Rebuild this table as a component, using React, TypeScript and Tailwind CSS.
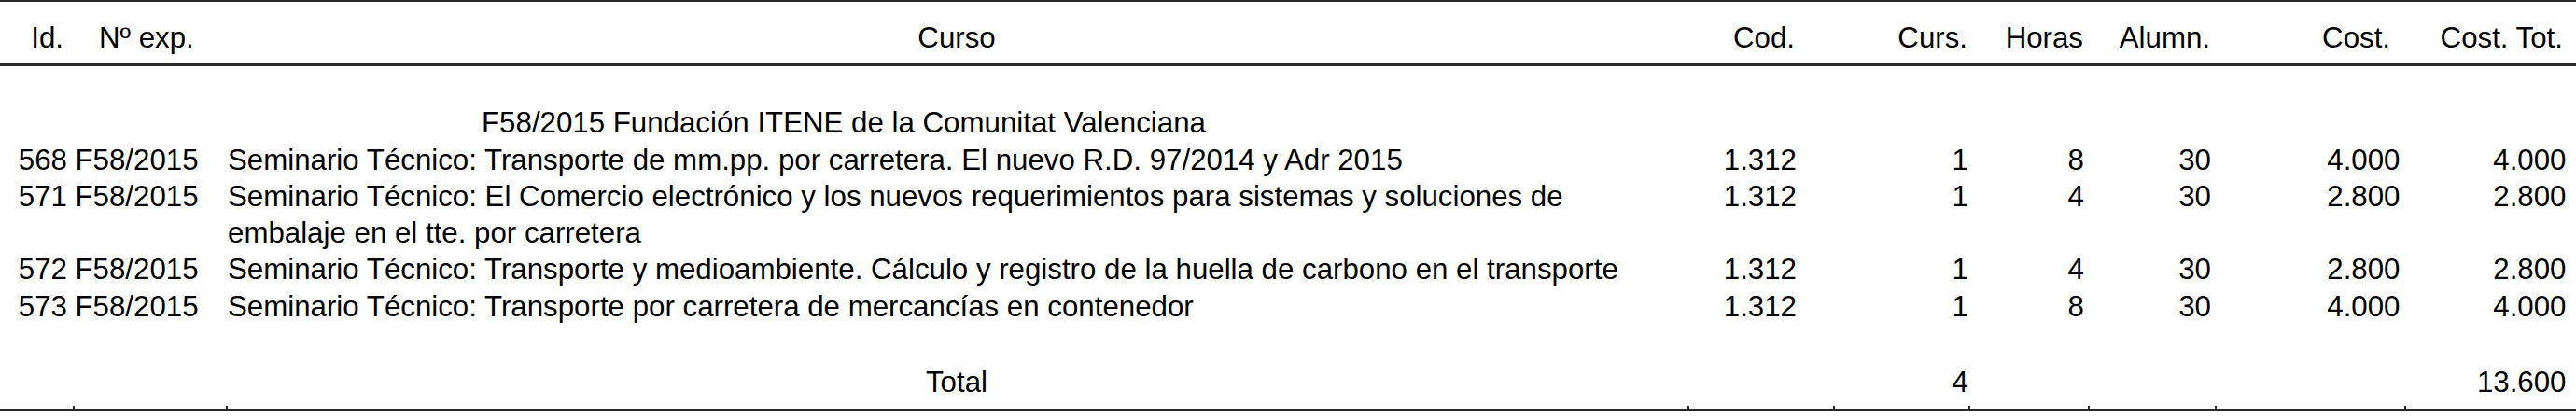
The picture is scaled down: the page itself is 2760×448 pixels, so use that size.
import React from "react";

const cols = "grid grid-cols-[78px_164px_1566px_156px_145px_128px_136px_203px_184px]";

type Row = {
  id: string;
  exp: string;
  curso: string;
  cod: string;
  curs: string;
  horas: string;
  alumn: string;
  cost: string;
  tot: string;
};

const rows: Row[] = [
  {
    id: "568",
    exp: "F58/2015",
    curso: "Seminario Técnico: Transporte de mm.pp. por carretera. El nuevo R.D. 97/2014 y Adr 2015",
    cod: "1.312",
    curs: "1",
    horas: "8",
    alumn: "30",
    cost: "4.000",
    tot: "4.000",
  },
  {
    id: "571",
    exp: "F58/2015",
    curso:
      "Seminario Técnico: El Comercio electrónico y los nuevos requerimientos para sistemas y soluciones de embalaje en el tte. por carretera",
    cod: "1.312",
    curs: "1",
    horas: "4",
    alumn: "30",
    cost: "2.800",
    tot: "2.800",
  },
  {
    id: "572",
    exp: "F58/2015",
    curso:
      "Seminario Técnico: Transporte y medioambiente. Cálculo y registro de la huella de carbono en el transporte",
    cod: "1.312",
    curs: "1",
    horas: "4",
    alumn: "30",
    cost: "2.800",
    tot: "2.800",
  },
  {
    id: "573",
    exp: "F58/2015",
    curso: "Seminario Técnico: Transporte por carretera de mercancías en contenedor",
    cod: "1.312",
    curs: "1",
    horas: "8",
    alumn: "30",
    cost: "4.000",
    tot: "4.000",
  },
];

export default function App() {
  return (
    <div
      className="w-[2760px] h-[448px] bg-white text-black text-[31.25px] leading-[39.25px] whitespace-nowrap"
      style={{ fontFamily: '"Liberation Sans", Arial, sans-serif' }}
    >
      {/* Header */}
      <div className={`${cols} border-t-2 border-b-[3px] border-[#2a2a2a] pt-[18.6px] pb-[8.15px]`}>
        <div className="text-right pr-[10px]">Id.</div>
        <div className="pl-[28px]">Nº exp.</div>
        <div className="text-center">Curso</div>
        <div className="text-right pr-[41px]">Cod.</div>
        <div className="text-right pr-[1px]">Curs.</div>
        <div className="text-right pr-[5px]">Horas</div>
        <div className="text-right pr-[5px]">Alumn.</div>
        <div className="text-right pr-[15px]">Cost.</div>
        <div className="text-right pr-[14px]">Cost. Tot.</div>
      </div>

      {/* Body */}
      <div className="pt-[41.4px]">
        <div className={cols}>
          <div className="col-span-3 text-center">F58/2015 Fundación ITENE de la Comunitat Valenciana</div>
        </div>
        {rows.map((r) => (
          <div key={r.id} className={cols}>
            <div className="text-right pr-[6px]">{r.id}</div>
            <div className="pl-[2.5px]">{r.exp}</div>
            <div className="pl-[2px] pr-[44px] whitespace-normal">{r.curso}</div>
            <div className="text-right pr-[39px]">{r.cod}</div>
            <div className="text-right pr-[0px]">{r.curs}</div>
            <div className="text-right pr-[4px]">{r.horas}</div>
            <div className="text-right pr-[4px]">{r.alumn}</div>
            <div className="text-right pr-[4.5px]">{r.cost}</div>
            <div className="text-right pr-[10.5px]">{r.tot}</div>
          </div>
        ))}

        {/* Total */}
        <div className={`${cols} pt-[41.75px]`}>
          <div />
          <div />
          <div className="text-center">Total</div>
          <div />
          <div className="text-right pr-[0px]">4</div>
          <div />
          <div />
          <div />
          <div className="text-right pr-[10.5px]">13.600</div>
        </div>

        {/* ticks + bottom line */}
        <div className={`${cols} h-[9px] items-end`}>
          <div className="h-[3px]" />
          <div className="h-[3px] border-l-2 border-[#2a2a2a]" />
          <div className="h-[3px] border-l-2 border-[#2a2a2a]" />
          <div className="h-[3px] border-l-2 border-[#2a2a2a]" />
          <div className="h-[3px] border-l-2 border-[#2a2a2a]" />
          <div className="h-[3px] border-l-2 border-[#2a2a2a]" />
          <div className="h-[3px] border-l-2 border-[#2a2a2a]" />
          <div className="h-[3px] border-l-2 border-[#2a2a2a]" />
          <div className="h-[3px] border-l-2 border-[#2a2a2a]" />
        </div>
        <div className="h-[3px] bg-[#2a2a2a]" />
      </div>
    </div>
  );
}
